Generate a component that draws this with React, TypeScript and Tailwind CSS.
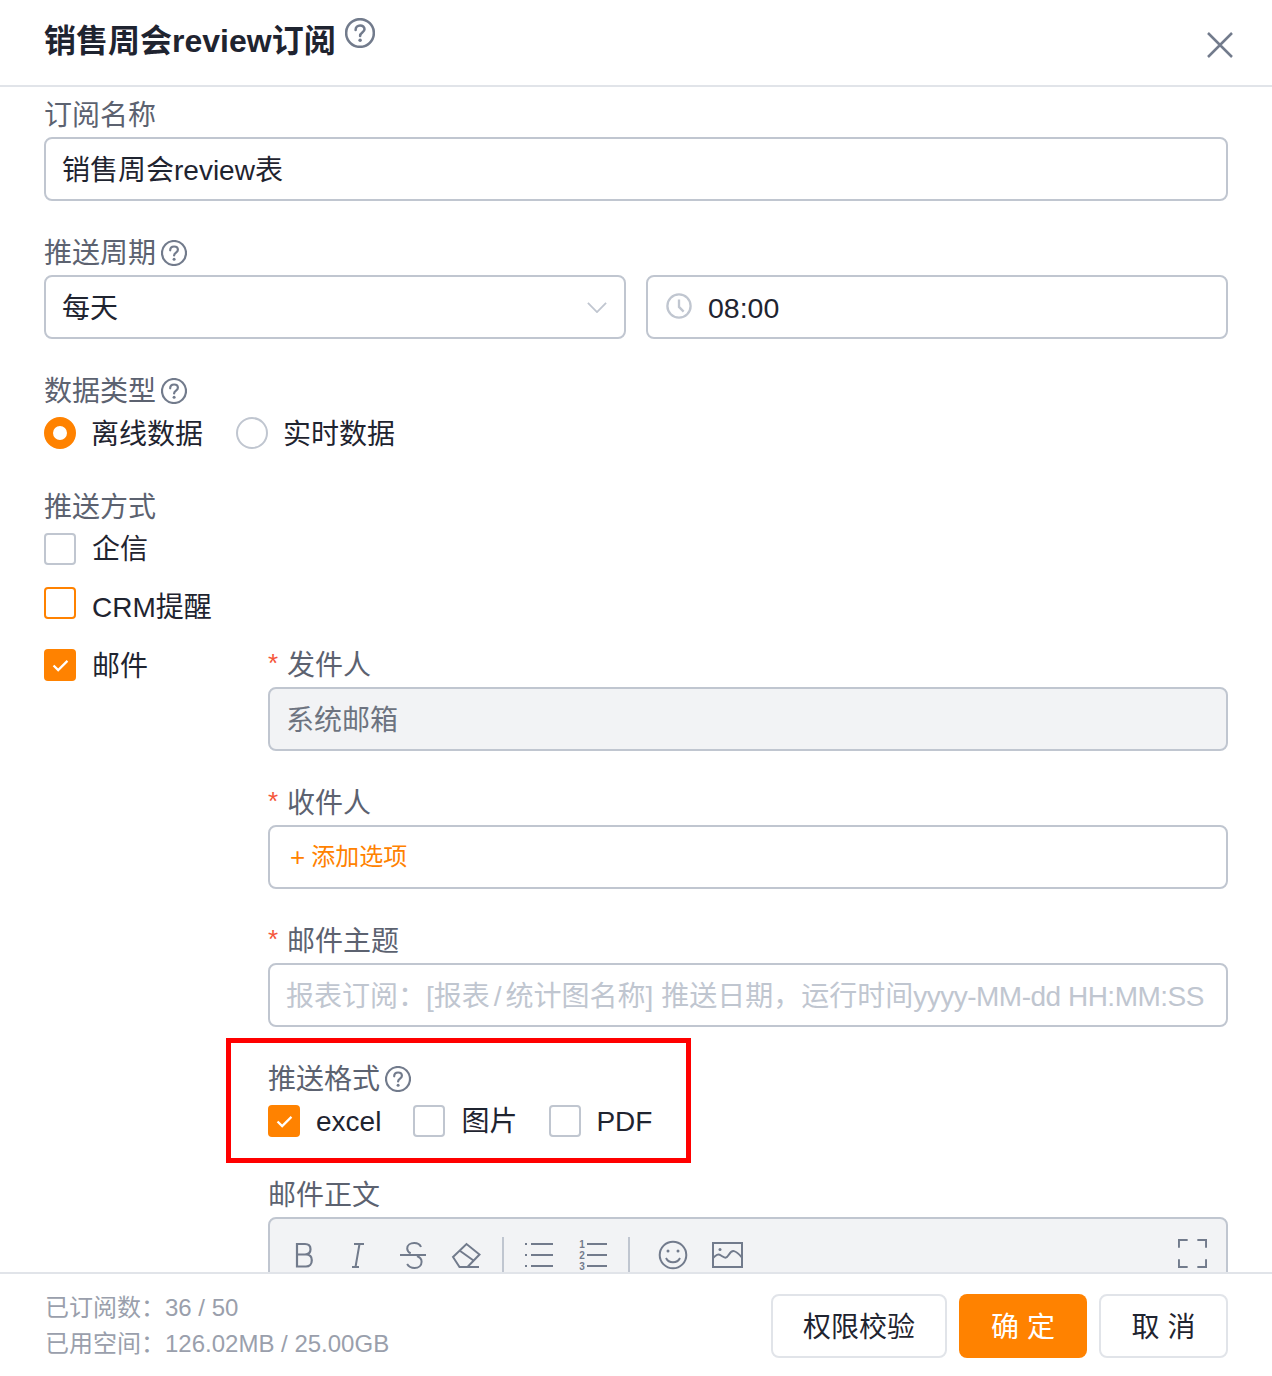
const font = "[font-family:'Liberation_Sans','Noto_Sans_CJK_SC',sans-serif]"

function Help({ big }: { big?: boolean }) {
  return (
    <svg viewBox="0 0 26 26" className={big ? "w-[30px] h-[30px]" : "w-[26px] h-[26px]"} fill="none" stroke="#727b8c" strokeWidth="2.2">
      <circle cx="13" cy="13" r="12" />
      <path d="M9.2 10.3c0-2.300 1.700-3.800 3.900-3.800s3.800 1.400 3.800 3.300c0 2.900-3.800 2.800-3.800 5.700" strokeLinecap="round" />
      <circle cx="13.1" cy="19.200" r="1.500" fill="#727b8c" stroke="none" />
    </svg>
  )
}

function Txt({ children, className, tight }: { children: React.ReactNode; className?: string; tight?: boolean }) {
  return <span className={`${tight ? "pt-[2px]" : "pt-[4px]"} ${className ?? ""}`}>{children}</span>
}

function Label({ children, required, help }: { children: React.ReactNode; required?: boolean; help?: boolean }) {
  return (
    <div className="flex items-center h-[44px] text-[28px] text-[#5c6270]">
      {required && <span className="w-[19px] -mt-[4px] text-[26px] text-[#f5563a] leading-none">*</span>}
      <span className="pt-[2px]">{children}</span>
      {help && (
        <span className="ml-[5px]">
          <Help />
        </span>
      )}
    </div>
  )
}

function Field({ children, className }: { children: React.ReactNode; className?: string }) {
  return (
    <div className={`flex items-center h-[64px] border-2 border-[#c0c6d0] rounded-lg text-[28px] ${className ?? "px-[16px]"}`}>
      {children}
    </div>
  )
}

function Check({ state }: { state?: "on" | "hover" }) {
  if (state === "on") {
    return (
      <span className="flex items-center justify-center w-[32px] h-[32px] rounded-[4px] bg-[#ff8200] shrink-0">
        <svg viewBox="0 0 18 14" className="w-[17px] h-[13px]" fill="none" stroke="#fff" strokeWidth="2.4">
          <path d="M1.5 7l5 5L16.5 2" />
        </svg>
      </span>
    )
  }
  return (
    <span className={`block w-[32px] h-[32px] rounded-[4px] border-2 bg-white shrink-0 ${state === "hover" ? "border-[#ff8200]" : "border-[#c0c6d0]"}`} />
  )
}

function Toolbar() {
  return (
    <div className="flex items-center h-[50px] mt-[12px]">
      <svg viewBox="0 0 452 34" className="ml-[25px] w-[452px] h-[34px] overflow-visible" fill="none" stroke="#727b8c" strokeWidth="2">
        {/* bold */}
        <path strokeWidth="2.2" d="M2 5h8c3.400 0 5.500 2 5.500 5.300S13.400 15.500 10 15.500H2zM2 15.500h9c3.600 0 5.800 2.200 5.800 5.700S14.600 27.500 11 27.500H2z" />
        {/* italic */}
        <path d="M59 5h10M57 28h7M64.500 5l-4 23" />
        {/* strike */}
        <path d="M126 8c-1-2.600-3.400-4-6.800-4-4 0-7 2.100-7 5.400 0 2.300 1.300 3.800 3.500 5M105 16h26M122 17c3 1.200 4.600 3 4.600 5.800 0 3.800-3 6.200-7 6.200-3.400 0-6-1.500-7.500-4" />
        {/* eraser */}
        <path d="M158 18l13.500-13 13 10.500-12 12.500h-8zM164.500 11.500l14 10M166 28h18" />
        <path stroke="#c0c6d0" d="M208 -2v36" />
        {/* bullet list */}
        <path d="M236 5h22M236 16h22M236 27h22" />
        <path d="M230 5h2M230 16h2M230 27h2" />
        {/* ordered list */}
        <path d="M292 5h20M292 16h20M292 27h20" />
        <g fill="#727b8c" stroke="none" fontSize="10" fontWeight="bold" textAnchor="middle" fontFamily="'Liberation Sans', sans-serif">
          <text x="287" y="8.500">1</text>
          <text x="287" y="19.500">2</text>
          <text x="287" y="30.500">3</text>
        </g>
        <path stroke="#c0c6d0" d="M334 -2v36" />
        {/* smile */}
        <circle cx="378" cy="16" r="13.300" />
        <circle cx="373" cy="12" r="1.500" fill="#727b8c" stroke="none" />
        <circle cx="383" cy="12" r="1.500" fill="#727b8c" stroke="none" />
        <path d="M371 19c1.500 3 4 4.300 7 4.300s5.500-1.300 7-4.300" />
        {/* image */}
        <rect x="418" y="4" width="29" height="24" />
        <circle cx="425" cy="10.500" r="1.500" fill="#727b8c" stroke="none" />
        <path d="M418 19c3-3 5-4.500 8-2.500s5 4 8-1 6-5 13 3" />
      </svg>
      <svg viewBox="0 0 30 30" className="ml-auto mr-[19px] -mt-[5px] w-[29px] h-[29px]" fill="none" stroke="#727b8c" strokeWidth="2">
        <path d="M1 9V1h9M20 1h9v8M1 21v8h9M20 29h9v-8" />
      </svg>
    </div>
  )
}

export default function App() {
  return (
    <div className={`flex flex-col w-[1272px] h-[1376px] bg-white overflow-hidden text-[#1f2430] ${font}`}>
      <div className="flex items-start justify-between h-[87px] shrink-0 border-b-2 border-[#e1e4e9] pl-[44px] pr-[38px]">
        <div className="flex items-start">
          <span className="mt-[21px] text-[32px] leading-[40px] font-bold">销售周会review订阅</span>
          <span className="ml-[9px] mt-[18px]">
            <Help big />
          </span>
        </div>
        <svg viewBox="0 0 28 28" className="mt-[31px] w-[28px] h-[28px]" fill="none" stroke="#727b8c" strokeWidth="2.5">
          <path d="M2 2l24 24M26 2L2 26" />
        </svg>
      </div>

      <div className="flex-1 min-h-0 overflow-hidden pl-[44px] pr-[44px] pt-[6px]">
        <Label>订阅名称</Label>
        <Field>
          <Txt>销售周会review表</Txt>
        </Field>

        <div className="mt-[30px]">
          <Label help>推送周期</Label>
          <div className="grid grid-cols-2 gap-[20px]">
            <Field className="justify-between pl-[16px] pr-[17px]">
              <Txt>每天</Txt>
              <svg viewBox="0 0 22 12" className="w-[20px] h-[11px]" fill="none" stroke="#c0c6d0" strokeWidth="2">
                <path d="M1 1l10 10L21 1" />
              </svg>
            </Field>
            <Field className="px-[18px]">
              <svg viewBox="0 0 28 28" className="-mt-[2px] w-[26px] h-[26px]" fill="none" stroke="#c0c6d0" strokeWidth="2.500">
                <circle cx="14" cy="14" r="12.500" />
                <path d="M14 7v8l5 5" />
              </svg>
              <span className="ml-[16px] pt-[2px] text-[28.5px]">08:00</span>
            </Field>
          </div>
        </div>

        <div className="mt-[30px]">
          <Label help>数据类型</Label>
          <div className="flex items-center h-[40px] text-[28px]">
            <span className="w-[32px] h-[32px] rounded-full border-[9px] border-[#ff8200] bg-white" />
            <Txt className="ml-[15px]">离线数据</Txt>
            <span className="ml-[33px] w-[32px] h-[32px] rounded-full border-2 border-[#c0c6d0] bg-white" />
            <Txt className="ml-[15px]">实时数据</Txt>
          </div>
        </div>

        <div className="mt-[32px]">
          <Label>推送方式</Label>
          <div className="flex items-center h-[40px] text-[28px] gap-[16px]">
            <Check />
            <Txt tight>企信</Txt>
          </div>
          <div className="flex items-center h-[40px] mt-[18px] text-[28px] gap-[16px]">
            <span className="-mt-[8px]">
              <Check state="hover" />
            </span>
            <Txt tight>CRM提醒</Txt>
          </div>

          <div className="flex items-start mt-[16px]">
            <div className="flex items-center w-[224px] h-[44px] text-[28px] gap-[16px] shrink-0">
              <Check state="on" />
              <Txt>邮件</Txt>
            </div>
            <div className="flex-1 min-w-0">
              <Label required>发件人</Label>
              <Field className="px-[16px] bg-[#f2f3f5] text-[#6d7380]">
                <Txt>系统邮箱</Txt>
              </Field>

              <div className="mt-[30px]">
                <Label required>收件人</Label>
                <Field className="px-[17px] text-[#ff8200]">
                  <span className="ml-[3px] mr-[6px] text-[26px] leading-none">+</span>
                  <span className="text-[24px]">添加选项</span>
                </Field>
              </div>

              <div className="mt-[30px]">
                <Label required>邮件主题</Label>
                <Field className="px-[16px] text-[#c0c6d0] whitespace-nowrap">
                  <Txt>
                    报表订阅{"\uFF1A"}[报表<span className="px-[4px]">/</span>统计图名称] 推送日期{"\uFF0C"}运行时间
                    <span className="tracking-[-0.5px]">yyyy-MM-dd HH:MM:SS</span>
                  </Txt>
                </Field>
              </div>

              <div className="relative mt-[30px]">
                <Label help>推送格式</Label>
                <div className="flex items-center h-[40px] text-[28px]">
                  <Check state="on" />
                  <Txt tight className="ml-[16px]">excel</Txt>
                  <span className="ml-[32px]">
                    <Check />
                  </span>
                  <Txt tight className="ml-[16px]">图片</Txt>
                  <span className="ml-[32px]">
                    <Check />
                  </span>
                  <Txt tight className="ml-[15px]">PDF</Txt>
                </div>
                <div className="absolute left-[-42px] top-[-19px] w-[465px] h-[125px] border-[5px] border-[#ff0000]" />
              </div>

              <div className="mt-[32px]">
                <Label>邮件正文</Label>
                <div className="h-[120px] border-2 border-[#c0c6d0] rounded-t-lg bg-[#f2f3f5] overflow-hidden">
                  <Toolbar />
                </div>
              </div>
            </div>
          </div>
        </div>
      </div>

      <div className="flex items-start justify-between h-[104px] shrink-0 border-t-2 border-[#e1e4e9] pl-[45px] pr-[44px] bg-white">
        <div className="mt-[16px] text-[24px] leading-[36px] text-[#9a9fac]">
          <div>已订阅数{"\uFF1A"}36 / 50</div>
          <div>已用空间{"\uFF1A"}126.02MB / 25.00GB</div>
        </div>
        <div className="flex gap-[12px] mt-[20px] text-[28px]">
          <button className="w-[176px] h-[64px] pt-[4px] border-2 border-[#e1e4e9] rounded-lg">权限校验</button>
          <button className="w-[128px] h-[64px] pt-[4px] rounded-lg bg-[#ff8200] text-white">确 定</button>
          <button className="w-[129px] h-[64px] pt-[4px] border-2 border-[#e1e4e9] rounded-lg">取 消</button>
        </div>
      </div>
    </div>
  )
}
